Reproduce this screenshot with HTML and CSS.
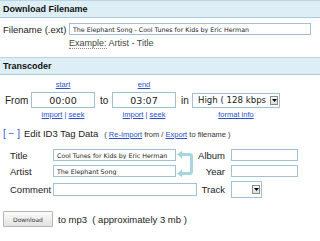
FILE: index.html
```html
<!DOCTYPE html>
<html lang="en">
<head>
  <meta charset="UTF-8">
  <title>MP3 Download</title>
  <link rel="stylesheet" href="styles.css">
</head>
<body>
  <!-- Download Filename -->
  <div class="bar">Download Filename</div>
  <div class="fn-row">
    <label class="fn-label" for="fname">Filename (.ext)</label>
    <input class="field fn-input" id="fname" type="text" value="The Elephant Song - Cool Tunes for Kids by Eric Herman">
  </div>
  <div class="example"><span class="abbr">Example:</span> Artist - Title</div>

  <!-- Transcoder -->
  <div class="bar">Transcoder</div>
  <div class="trans">
    <span></span>
    <a class="link small" href="#">start</a>
    <span></span>
    <a class="link small" href="#">end</a>
    <span></span>
    <span></span>

    <span class="tlabel">From</span>
    <input class="field time" type="text" value="00:00">
    <span class="tlabel mid">to</span>
    <input class="field time" type="text" value="03:07">
    <span class="tlabel mid">in</span>
    <div class="dropdown quality">
      <span class="dd-text">High ( 128 kbps</span>
      <span class="dd-btn"><svg width="5" height="3" viewBox="0 0 5 3"><path d="M0 0h5L2.5 3z" fill="#000"/></svg></span>
    </div>

    <span></span>
    <span class="small"><a class="link" href="#">import</a> | <a class="link" href="#">seek</a></span>
    <span></span>
    <span class="small"><a class="link" href="#">import</a> | <a class="link" href="#">seek</a></span>
    <span></span>
    <a class="link small" href="#">format info</a>
  </div>

  <!-- ID3 -->
  <div class="id3-head">
    <a class="toggle" href="#">[ &minus; ]</a>
    <span class="id3-title">Edit ID3 Tag Data</span>
    <span class="id3-note">( <a class="link" href="#">Re-Import</a> from / <a class="link" href="#">Export</a> to filename )</span>
  </div>
  <div class="tags">
    <span class="tag-label">Title</span>
    <input class="field tag-input" type="text" value="Cool Tunes for Kids by Eric Herman">
    <svg class="swap" width="17" height="28" viewBox="0 0 17 28">
      <path d="M4 4.5H12.5Q14.5 4.5 14.5 6.5V21.5Q14.5 23.5 12.5 23.5H4" fill="none" stroke="#a6d6de" stroke-width="3"/>
      <path d="M0 4.5L5 0.5V8.5z M0 23.5L5 19.5V27.5z" fill="#a6d6de"/>
    </svg>
    <span class="tag-label right">Album</span>
    <input class="field side-input" type="text">

    <span class="tag-label">Artist</span>
    <input class="field tag-input" type="text" value="The Elephant Song">
    <span class="tag-label right">Year</span>
    <input class="field side-input" type="text">

    <span class="tag-label">Comment</span>
    <input class="field comment-input" type="text">
    <span class="tag-label right">Track</span>
    <div class="dropdown track">
      <span class="dd-text"></span>
      <span class="dd-btn"><svg width="5" height="3" viewBox="0 0 5 3"><path d="M0 0h5L2.5 3z" fill="#000"/></svg></span>
    </div>
  </div>

  <!-- Submit -->
  <div class="submit-row">
    <button class="dl-btn" type="button">Download</button>
    <span class="submit-note">to mp3 &nbsp;( approximately 3 mb )</span>
  </div>
</body>
</html>
```

FILE: styles.css
```css
/* General Layout */
body {
  font-family: "Liberation Sans", Arial, sans-serif;
  font-size: 9.5px;
  color: #222;
  margin: 0;
  padding: 0;
  background: #fff;
}

a.link {
  color: #2a4fd0;
  text-decoration: underline;
}

.small {
  font-size: 7.5px;
  color: #2a4fd0;
  line-height: 10px;
  text-align: center;
}

.field {
  box-sizing: border-box;
  border: 1px solid #a2c0d3;
  background: #fff;
  font-family: "DejaVu Sans", Verdana, sans-serif;
  font-size: 6.3px;
  color: #222;
  padding: 0 3px;
  margin: 0;
  outline: none;
}

/* Section bars */
.bar {
  height: 16px;
  line-height: 16px;
  background: #deeef7;
  border-top: 1px solid #b9d6e7;
  border-bottom: 1px solid #a8cbe0;
  padding-left: 3px;
  font-weight: bold;
  font-size: 9px;
  color: #111;
}

/* Filename */
.fn-row {
  display: flex;
  align-items: center;
  margin-top: 5px;
}

.fn-label {
  width: 66px;
  padding-left: 3px;
}

.fn-input {
  width: 242px;
  height: 12px;
}

.example {
  margin: 3px 0 8px 69px;
  line-height: 11px;
  font-size: 9px;
  color: #444;
}

.abbr {
  border-bottom: 1px dotted #888;
}

/* Transcoder */
.trans {
  display: grid;
  grid-template-columns: 26px 64px 17px 64px 16px 88px;
  grid-template-rows: 10px 16px 10px;
  row-gap: 2px;
  padding-left: 5px;
  margin-top: 5px;
  align-items: center;
}

.trans .tlabel {
  font-size: 10px;
}

.trans .mid {
  padding-left: 5px;
}

.time {
  width: 64px;
  height: 16px;
  text-align: center;
  font-size: 9.5px;
}

.dropdown {
  box-sizing: border-box;
  display: flex;
  align-items: center;
  justify-content: space-between;
  border: 1px solid #a2c0d3;
  background: #fff;
  padding: 0 1px 0 5px;
}

.quality {
  width: 88px;
  height: 15px;
}

.dd-text {
  font-family: "DejaVu Sans", Verdana, sans-serif;
  font-size: 8.6px;
  color: #222;
  white-space: nowrap;
}

.dd-btn {
  box-sizing: border-box;
  width: 8px;
  height: 9px;
  border: 1px solid #8a8a8a;
  background: linear-gradient(#fafafa, #dcdcdc);
  display: flex;
  align-items: center;
  justify-content: center;
}

/* ID3 */
.id3-head {
  display: flex;
  align-items: baseline;
  margin: 8px 0 8px 3px;
  line-height: 12px;
}

.toggle {
  color: #2f56e0;
  text-decoration: none;
  font-size: 10px;
  margin-right: 4px;
}

.id3-title {
  font-size: 9.5px;
  margin-right: 6px;
}

.id3-note {
  font-size: 7.5px;
  color: #333;
}

.tags {
  display: grid;
  grid-template-columns: 43px 123px 18px 34px 67px;
  grid-template-rows: 12px 12px 17px;
  column-gap: 0;
  row-gap: 4px;
  padding-left: 10px;
  align-items: center;
}

.tag-label {
  font-size: 9.5px;
}

.tag-label.right {
  text-align: right;
  padding-right: 3px;
}

.tag-input {
  width: 123px;
  height: 12px;
}

.swap {
  grid-row: 1 / 3;
  grid-column: 3;
  margin-left: 1px;
  align-self: start;
  margin-top: 1px;
}

.side-input {
  width: 67px;
  height: 12px;
  margin-left: 3px;
}

.comment-input {
  grid-column: 2 / 4;
  width: 144px;
  height: 13px;
}

.track {
  width: 31px;
  height: 17px;
  margin-left: 3px;
}

/* Submit */
.submit-row {
  display: flex;
  align-items: center;
  margin: 13px 0 0 3px;
}

.dl-btn {
  box-sizing: border-box;
  width: 50px;
  height: 16px;
  padding: 0;
  border: 1px solid #b5b5b5;
  border-radius: 1px;
  background: linear-gradient(#fbfbfb, #e2e2e2);
  font-family: "DejaVu Sans", Verdana, sans-serif;
  font-size: 6px;
  color: #333;
}

.submit-note {
  margin-left: 5px;
  font-size: 9.5px;
}
```
